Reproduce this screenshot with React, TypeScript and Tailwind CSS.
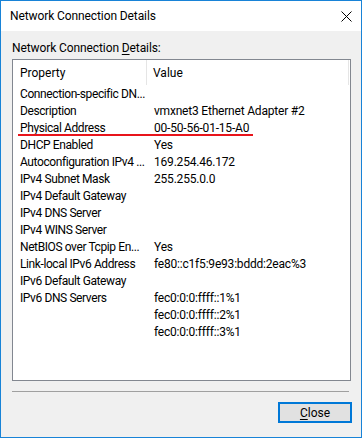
const ROWS: [string, string][] = [
  ['Connection-specific DN...', ''],
  ['Description', 'vmxnet3 Ethernet Adapter #2'],
  ['Physical Address', '00-50-56-01-15-A0'],
  ['DHCP Enabled', 'Yes'],
  ['Autoconfiguration IPv4 ...', '169.254.46.172'],
  ['IPv4 Subnet Mask', '255.255.0.0'],
  ['IPv4 Default Gateway', ''],
  ['IPv4 DNS Server', ''],
  ['IPv4 WINS Server', ''],
  ['NetBIOS over Tcpip En...', 'Yes'],
  ['Link-local IPv6 Address', 'fe80::c1f5:9e93:bddd:2eac%3'],
  ['IPv6 Default Gateway', ''],
  ['IPv6 DNS Servers', 'fec0:0:0:ffff::1%1'],
  ['', 'fec0:0:0:ffff::2%1'],
  ['', 'fec0:0:0:ffff::3%1'],
];

export default function App() {
  return (
    <div className="w-[362px] h-[438px] border border-[#1883d7] flex flex-col text-[12px] text-black font-['Roboto',sans-serif]">
      {/* title bar */}
      <div className="h-[30px] bg-white flex items-center justify-between pl-[9px] pr-[9px] shrink-0">
        <span className="leading-[16px] tracking-[-0.1px]">Network Connection Details</span>
        <svg width="11" height="11" viewBox="0 0 11 11">
          <path d="M0.5 0.5 L10.5 10.5 M10.5 0.5 L0.5 10.5" stroke="#000" strokeWidth="1" />
        </svg>
      </div>

      <div className="flex-1 bg-[#f0f0f0] pl-[11px] pr-[10px] flex flex-col">
        <div className="pt-[9px] leading-[16px] h-[28px] tracking-[-0.1px]">
          Network Connection <span className="underline underline-offset-2">D</span>etails:
        </div>

        <div className="h-[322px] border border-[#828790] bg-white relative">
          <div className="h-[26px] flex">
            <div className="w-[134px] pl-[7px] flex items-center border-r border-[#e5e5e5] h-[25px]">Property</div>
            <div className="flex-1 pl-[6px] flex items-center border-r border-[#e5e5e5] h-[25px] mr-[1px]">Value</div>
          </div>
          {ROWS.map(([k, v], i) => (
            <div key={i} className="h-[17px] flex items-center leading-[17px]">
              <div className="w-[134px] pl-[7px] whitespace-nowrap tracking-[-0.4px]">{k}</div>
              <div className="flex-1 pl-[7px] whitespace-nowrap tracking-[-0.2px]">{v}</div>
            </div>
          ))}
          {/* red annotation line */}
          <div className="absolute left-[5px] top-[74px] w-[235px] h-[2px] bg-[#e8141b]" />
        </div>

        <div className="mt-[10px] h-px bg-[#a0a0a0] mr-[2px]" />

        <div className="flex justify-end mt-[10px] mr-[-1px]">
          <button className="w-[74px] h-[21px] border-2 border-[#0078d7] bg-[#e1e1e1] flex items-center justify-center leading-[16px]">
            <span><span className="underline underline-offset-2">C</span>lose</span>
          </button>
        </div>
      </div>
    </div>
  );
}
